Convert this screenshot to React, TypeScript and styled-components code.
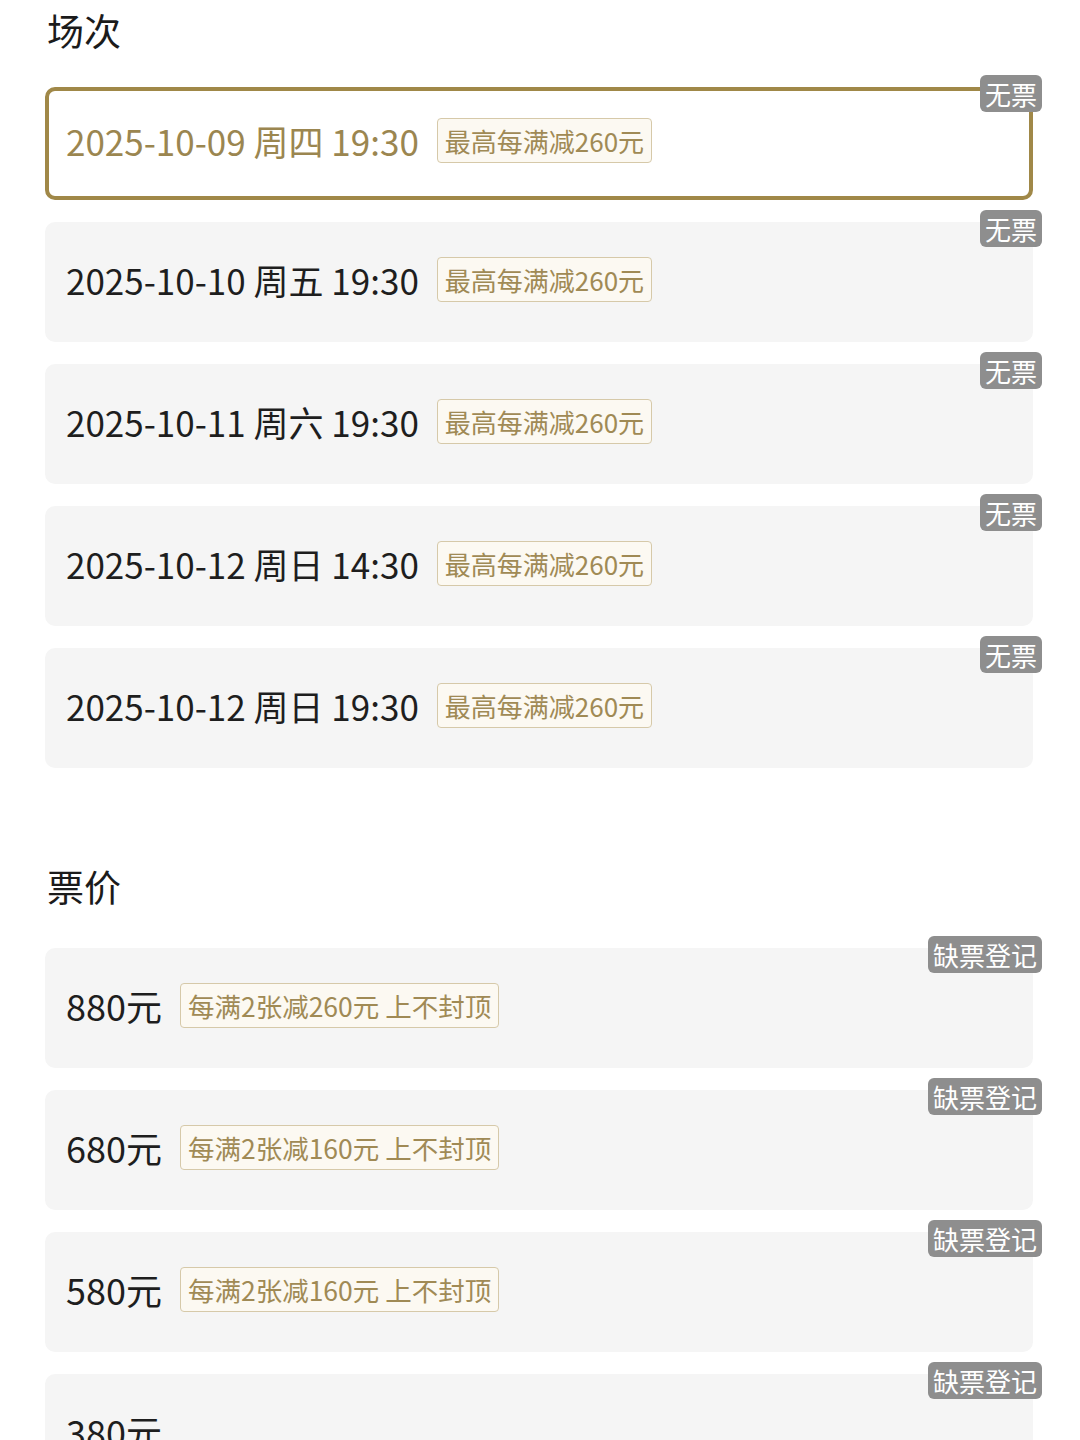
import { FC } from 'react'
import styled, { createGlobalStyle } from 'styled-components'

type Session = {
	date: string
	promo: string
	selected?: boolean
}

type Price = {
	amount: string
	promo?: string
}

const sessions: Session[] = [
	{ date: '2025-10-09 周四 19:30', promo: '最高每满减260元', selected: true },
	{ date: '2025-10-10 周五 19:30', promo: '最高每满减260元' },
	{ date: '2025-10-11 周六 19:30', promo: '最高每满减260元' },
	{ date: '2025-10-12 周日 14:30', promo: '最高每满减260元' },
	{ date: '2025-10-12 周日 19:30', promo: '最高每满减260元' },
]

const prices: Price[] = [
	{ amount: '880元', promo: '每满2张减260元 上不封顶' },
	{ amount: '680元', promo: '每满2张减160元 上不封顶' },
	{ amount: '580元', promo: '每满2张减160元 上不封顶' },
	{ amount: '380元' },
]

const App: FC = () => {
	return (
		<>
			<GlobalStyle />
			<Page>
				<SectionTitle>场次</SectionTitle>
				<CardList>
					{sessions.map((s) => (
						<OptionCard key={s.date} selected={s.selected}>
							<MainText selected={s.selected}>{s.date}</MainText>
							<PromoTag>{s.promo}</PromoTag>
							<StatusBadge selected={s.selected}>无票</StatusBadge>
						</OptionCard>
					))}
				</CardList>

				<SectionTitle spaced>票价</SectionTitle>
				<CardList>
					{prices.map((p) => (
						<OptionCard key={p.amount}>
							<MainText large>{p.amount}</MainText>
							{p.promo && <PromoTag wide>{p.promo}</PromoTag>}
							<StatusBadge>缺票登记</StatusBadge>
						</OptionCard>
					))}
				</CardList>
			</Page>
		</>
	)
}

const GlobalStyle = createGlobalStyle`
	html, body {
		margin: 0;
		padding: 0;
		background: #ffffff;
	}
	body {
		font-family: "Noto Sans CJK SC", "Noto Sans", sans-serif;
		color: #1b1b1b;
	}
`

const Page = styled.div`
	width: 1080px;
	height: 1440px;
	overflow: hidden;
	box-sizing: border-box;
	padding: 0 47px 0 45px;
	display: flex;
	flex-direction: column;
`

const SectionTitle = styled.h2<{ spaced?: boolean }>`
	margin: ${({ spaced }) => (spaced ? '88px 0 32px' : '0 0 27px')};
	padding-left: 2px;
	height: 60px;
	line-height: 60px;
	font-size: 37px;
	font-weight: 400;
	color: #1b1b1b;
`

const CardList = styled.div`
	display: flex;
	flex-direction: column;
	gap: 22px;
`

const OptionCard = styled.div<{ selected?: boolean }>`
	position: relative;
	flex-shrink: 0;
	box-sizing: border-box;
	height: ${({ selected }) => (selected ? '113px' : '120px')};
	display: flex;
	align-items: center;
	gap: 18px;
	padding: 0 0 6px ${({ selected }) => (selected ? '17px' : '21px')};
	border-radius: 10px;
	background: ${({ selected }) => (selected ? '#ffffff' : '#f5f5f5')};
	border: ${({ selected }) => (selected ? '4px solid #a08848' : 'none')};
`

const MainText = styled.span<{ selected?: boolean; large?: boolean }>`
	font-size: ${({ large }) => (large ? '36px' : '35px')};
	line-height: 1;
	color: ${({ selected }) => (selected ? '#9b8650' : '#1e1e1e')};
	white-space: nowrap;
`

const PromoTag = styled.span<{ wide?: boolean }>`
	box-sizing: border-box;
	height: 45px;
	display: inline-flex;
	align-items: center;
	padding: 0 7px;
	border: 1.5px solid #d6c9a9;
	border-radius: 4px;
	background: #fcf9f2;
	color: #a08a55;
	font-size: ${({ wide }) => (wide ? '26.5px' : '26px')};
	white-space: nowrap;
`

const StatusBadge = styled.span<{ selected?: boolean }>`
	position: absolute;
	top: ${({ selected }) => (selected ? '-16px' : '-12px')};
	right: ${({ selected }) => (selected ? '-13px' : '-9px')};
	height: 37px;
	line-height: 37px;
	padding: 0 5px;
	border-radius: 6px;
	background: #8e8e8e;
	color: #ffffff;
	font-size: 26px;
	white-space: nowrap;
`

export default App
